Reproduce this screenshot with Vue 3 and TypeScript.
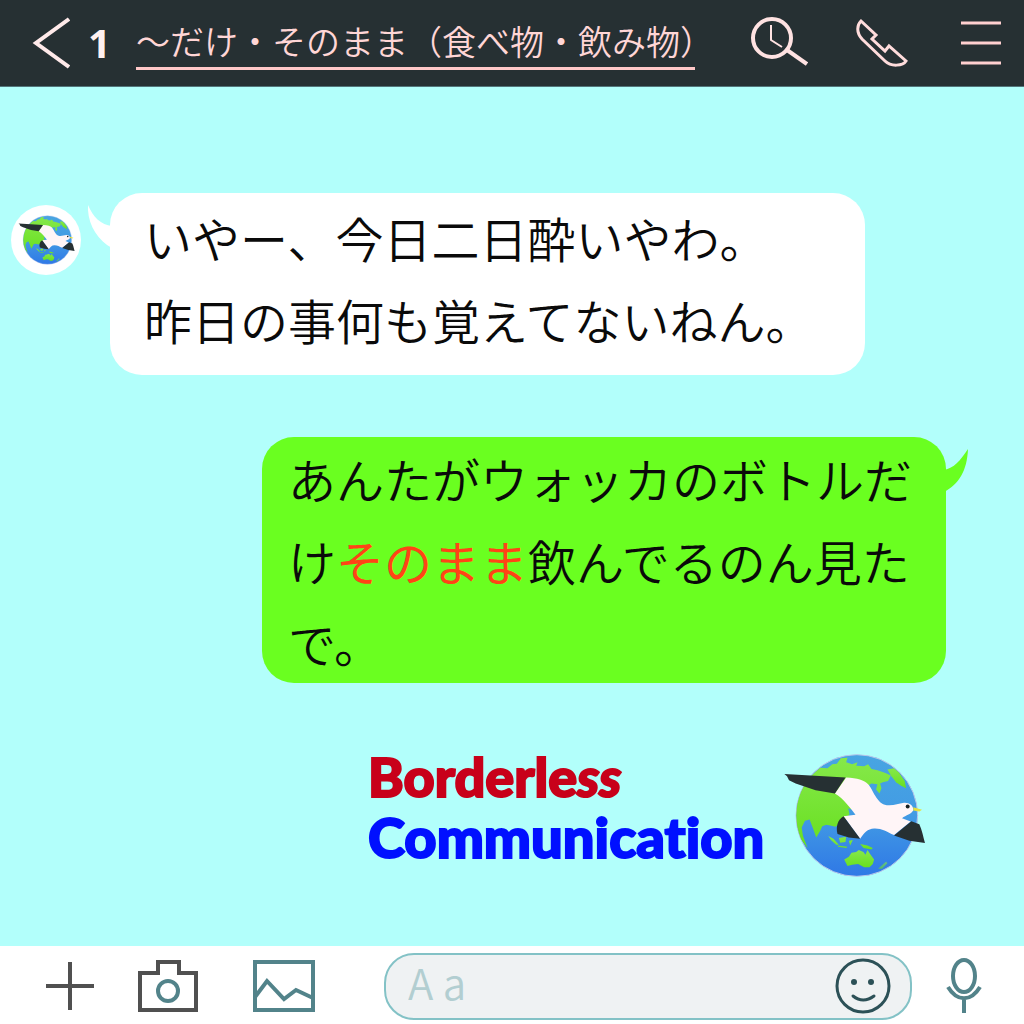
<script setup lang="ts">
import { ref } from 'vue'

interface Part {
  text: string
  key?: boolean
}

const unread = ref(1)
const title = ref('～だけ・そのまま（食べ物・飲み物')
const draft = ref('')
const received = ['いやー、今日二日酔いやわ。', '昨日の事何も覚えてないねん。']
const sent: Part[][] = [
  [{ text: 'あんたがウォッカのボトルだ' }],
  [{ text: 'け' }, { text: 'そのまま', key: true }, { text: '飲んでるのん見た' }],
  [{ text: 'で。' }],
]
</script>

<template>
  <div class="app">
    <svg class="defs" aria-hidden="true">
      <defs>
        <linearGradient id="sea" x1="0" y1="0" x2="0" y2="1">
          <stop offset="0" stop-color="#48a5e2" />
          <stop offset="0.5" stop-color="#429be4" />
          <stop offset="1" stop-color="#2f78e6" />
        </linearGradient>
        <linearGradient id="land" x1="0" y1="0" x2="0" y2="1">
          <stop offset="0" stop-color="#86e84a" />
          <stop offset="1" stop-color="#68e020" />
        </linearGradient>
        <clipPath id="ball"><circle cx="260" cy="228" r="182" /></clipPath>
        <symbol id="globe" viewBox="38 40 430 376">
          <circle cx="260" cy="228" r="183" fill="url(#sea)" stroke="#b9c6ea" stroke-width="3" />
          <g clip-path="url(#ball)" fill="url(#land)">
            <path d="M70 240 L70 150 L128 104 L150 84 L172 86 L186 74 L200 72 L212 56 L232 54 L228 68 L246 74 L262 68 L258 78 L282 80 L294 74 L304 88 L322 92 L346 100 L362 108 L354 124 L338 128 L330 132 L334 146 L328 162 L318 150 L322 134 L304 132 L286 142 L280 160 L268 172 L262 190 L250 196 L246 210 L234 206 L238 224 L226 240 L214 246 L196 262 L180 258 L168 256 L156 260 L150 274 L138 294 L128 266 L118 240 L104 244 L94 264 L98 290 L112 326 L84 290 Z" />
            <path d="M352 90 L372 86 L386 98 L404 124 L408 146 L392 138 L378 128 L364 110 Z" />
            <path d="M174 290 L190 298 L206 316 L198 316 L182 302 Z M206 296 L228 292 L226 308 L210 310 Z M202 318 L232 322 L228 326 L204 322 Z M236 304 L248 302 L240 318 Z M270 314 L292 318 L308 326 L304 330 L280 326 Z" />
            <path d="M222 360 L236 352 L244 340 L258 338 L266 332 L280 338 L286 346 L292 332 L300 344 L312 360 L308 374 L298 384 L282 384 L264 374 L246 376 L232 380 Z" />
            <path d="M348 366 L352 372 L336 388 L324 388 Z" opacity="0.6" />
          </g>
          <path d="M228 114 C262 116 282 122 294 134 C308 148 320 194 350 197 C372 199 384 192 402 190 C418 189 430 198 430 212 C424 224 408 226 396 236 L422 246 L372 287 C350 276 334 266 312 267 C292 268 282 280 270 298 L220 230 L256 226 C236 200 220 178 194 162 Z" fill="#fff5f7" />
          <path d="M42 103 L226 114 L194 162 L136 152 L76 132 L56 122 L50 110 Z" fill="#263033" />
          <path d="M220 230 L270 298 L236 294 L202 284 C196 262 202 240 220 230 Z" fill="#263033" />
          <path d="M424 245 L448 254 C456 272 460 292 465 311 L418 304 L372 288 Z" fill="#263033" />
          <path d="M430 203 L456 211 L448 216 L430 213 Z" fill="#e8e03c" />
          <circle cx="413" cy="201" r="6" fill="#182022" />
        </symbol>
      </defs>
    </svg>

    <header class="bar">
      <button class="icon back" aria-label="戻る">
        <svg width="38" height="52" viewBox="0 0 38 52"><path d="M37 2 L4 26 L37 50" fill="none" stroke="#ffeaea" stroke-width="4" /></svg>
      </button>
      <span class="count">{{ unread }}</span>
      <h1 class="title">{{ title }}<span class="close">）</span></h1>
      <button class="icon search" aria-label="検索">
        <svg width="58" height="52" viewBox="0 0 58 52" fill="none" stroke="#ffe2e2">
          <circle cx="22" cy="21" r="19" stroke-width="4" />
          <path d="M37 33 L57 47" stroke-width="4" />
          <path d="M21 8 V23 L32 30" stroke-width="2" />
        </svg>
      </button>
      <button class="icon phone" aria-label="通話">
        <svg width="52" height="50" viewBox="0 0 52 50" fill="none" stroke="#ffdcdc" stroke-width="3">
          <path d="M5 3 L20 17 L16 21 L29 33 L33 28 L50 43 C47 48 35 49 29 43 L6 21 C0 14 1 7 5 3 Z" />
        </svg>
      </button>
      <button class="icon menu" aria-label="メニュー">
        <svg width="40" height="44" viewBox="0 0 40 44"><path d="M0 2 H40 M0 22 H40 M0 42 H40" stroke="#ffd0d0" stroke-width="3" /></svg>
      </button>
    </header>

    <main class="chat">
      <div class="row received">
        <span class="avatar"><svg width="57" height="50"><use href="#globe" /></svg></span>
        <div class="bubble white">
          <svg class="tail" width="24" height="44" viewBox="0 0 24 44"><path d="M0 0 C5 12 13 20 24 21 V43 C9 35 -1 18 0 0 Z" fill="#fff" /></svg>
          <p v-for="line in received" :key="line">{{ line }}</p>
        </div>
      </div>

      <div class="row sent">
        <div class="bubble green">
          <svg class="tail" width="24" height="44" viewBox="0 0 24 44"><path d="M24 0 C16 12 10 19 0 21 V43 C15 35 23 22 24 0 Z" fill="#6aff20" /></svg>
          <p v-for="(line, i) in sent" :key="i"><span v-for="part in line" :key="part.text" :class="{ key: part.key }">{{ part.text }}</span></p>
        </div>
      </div>

      <div class="brand">
        <p class="name">
          <span class="red">Borderle<i>ss</i></span>
          <span class="blue">Communication</span>
        </p>
        <svg width="143" height="125"><use href="#globe" /></svg>
      </div>
    </main>

    <footer class="composer">
      <button class="icon plus" aria-label="追加">
        <svg width="50" height="50" viewBox="0 0 50 50"><path d="M25 1 V49 M1 25 H49" stroke="#505050" stroke-width="4" /></svg>
      </button>
      <button class="icon camera" aria-label="カメラ">
        <svg width="60" height="52" viewBox="0 0 60 52" fill="none" stroke-width="4">
          <path d="M2 50 V13 H20 V2 H41 V13 H58 V50 Z" stroke="#505050" />
          <circle cx="30" cy="31" r="10" stroke="#52838a" />
        </svg>
      </button>
      <button class="icon picture" aria-label="写真">
        <svg width="62" height="52" viewBox="0 0 62 52" fill="none" stroke="#52838a" stroke-width="4">
          <path d="M2 2 H60 V50 H2 Z M2 37 L14 21 L31 39 L43 30 L60 38" />
        </svg>
      </button>
      <div class="field">
        <input v-model="draft" type="text" placeholder="A a" aria-label="メッセージ" />
        <button class="icon" aria-label="スタンプ">
          <svg width="56" height="56" viewBox="0 0 56 56" fill="none" stroke="#2c5157" stroke-width="3">
            <circle cx="28" cy="28" r="26" />
            <path d="M18 38 Q28 46 39 38" stroke-width="3" stroke-linecap="round" />
            <g fill="#2c5157" stroke="none"><circle cx="19" cy="24" r="3" /><circle cx="36" cy="24" r="3" /></g>
          </svg>
        </button>
      </div>
      <button class="icon mic" aria-label="音声">
        <svg width="36" height="56" viewBox="0 0 36 56" fill="none" stroke="#52838a" stroke-width="4">
          <ellipse cx="18" cy="18" rx="11" ry="16" />
          <path d="M2 29 C11 44 25 44 34 29 M18 40 V55" />
        </svg>
      </button>
    </footer>
  </div>
</template>

<style>
body {
  margin: 0;
}
</style>

<style scoped>
.app {
  display: flex;
  flex-direction: column;
  min-height: 100vh;
  background: #b2fffb;
  color: #0a0a0a;
  font-family: "Noto Sans CJK JP", "Noto Sans", sans-serif;
}
.defs {
  position: absolute;
  width: 0;
  height: 0;
}
.icon {
  flex: none;
  display: block;
  padding: 0;
  border: 0;
  background: none;
  cursor: pointer;
}
svg {
  display: block;
}
p,
h1 {
  margin: 0;
}

.bar {
  display: flex;
  align-items: center;
  box-sizing: border-box;
  height: 87px;
  padding: 0 23px 0 32px;
  background: #263033;
  border-bottom: 1px solid #52757a;
}
.count {
  margin-left: 18px;
  color: #fff0f0;
  font: bold 40px/48px "Noto Sans", sans-serif;
}
.title {
  margin: 0 auto 0 25px;
  padding-bottom: 3px;
  border-bottom: 3px solid #ffc8c8;
  color: #ffd6d6;
  font-size: 34px;
  font-weight: 350;
  line-height: 47px;
  white-space: nowrap;
}
.close {
  display: inline-block;
  width: 15px;
  text-spacing-trim: space-all;
}
.phone {
  margin-left: 48px;
}
.menu {
  margin-left: 53px;
}

.chat {
  flex: 1;
  padding: 106px 0 66px;
  font-size: 48px;
  font-weight: 350;
  line-height: 82px;
}
.row {
  display: flex;
  align-items: flex-start;
}
.received {
  padding: 0 159px 0 11px;
}
.sent {
  margin-top: 62px;
  padding: 0 78px 0 262px;
}
.avatar {
  flex: none;
  display: flex;
  align-items: center;
  justify-content: center;
  width: 70px;
  height: 70px;
  margin: 12px 29px 0 0;
  border-radius: 50%;
  background: #fff;
}
.bubble {
  position: relative;
  flex: 1;
  border-radius: 32px;
}
.white {
  padding: 3px 0 15px 34px;
  background: #fff;
}
.green {
  padding: 0 26px;
  background: #6aff20;
}
.tail {
  position: absolute;
  top: 12px;
}
.white .tail {
  right: calc(100% - 2px);
}
.green .tail {
  left: calc(100% - 2px);
}
.key {
  color: #ff4416;
  font-weight: 400;
}

.brand {
  display: flex;
  align-items: flex-end;
  justify-content: flex-end;
  margin-top: 64px;
  padding-right: 98px;
}
.name {
  width: 398px;
  margin: 0 17px 11px 0;
  font-family: Lato, sans-serif;
  font-size: 54px;
  font-weight: 900;
  font-variant-ligatures: none;
  line-height: 60px;
  -webkit-text-stroke: 2px currentColor;
}
.name span {
  display: block;
}
.red {
  color: #c8001a;
}
.blue {
  color: #0010ff;
  font-size: 56px;
}

.composer {
  display: flex;
  align-items: center;
  box-sizing: border-box;
  height: 78px;
  padding: 2px 42px 0 45px;
  background: #fff;
}
.camera {
  margin-left: 43px;
}
.picture {
  margin-left: 55px;
}
.field {
  flex: 1;
  display: flex;
  align-items: center;
  box-sizing: border-box;
  height: 67px;
  min-width: 0;
  margin: 0 34px 0 69px;
  padding: 0 19px 0 22px;
  border: 2px solid #83c2c6;
  border-radius: 30px;
  background: #eff2f3;
}
.field input {
  flex: 1;
  min-width: 0;
  height: 52px;
  padding: 0 0 9px;
  border: 0;
  outline: 0;
  background: none;
  color: #263033;
  font: 350 42px/52px "Noto Sans CJK JP", sans-serif;
}
.field input::placeholder {
  color: #b2ced1;
  opacity: 1;
}
</style>
